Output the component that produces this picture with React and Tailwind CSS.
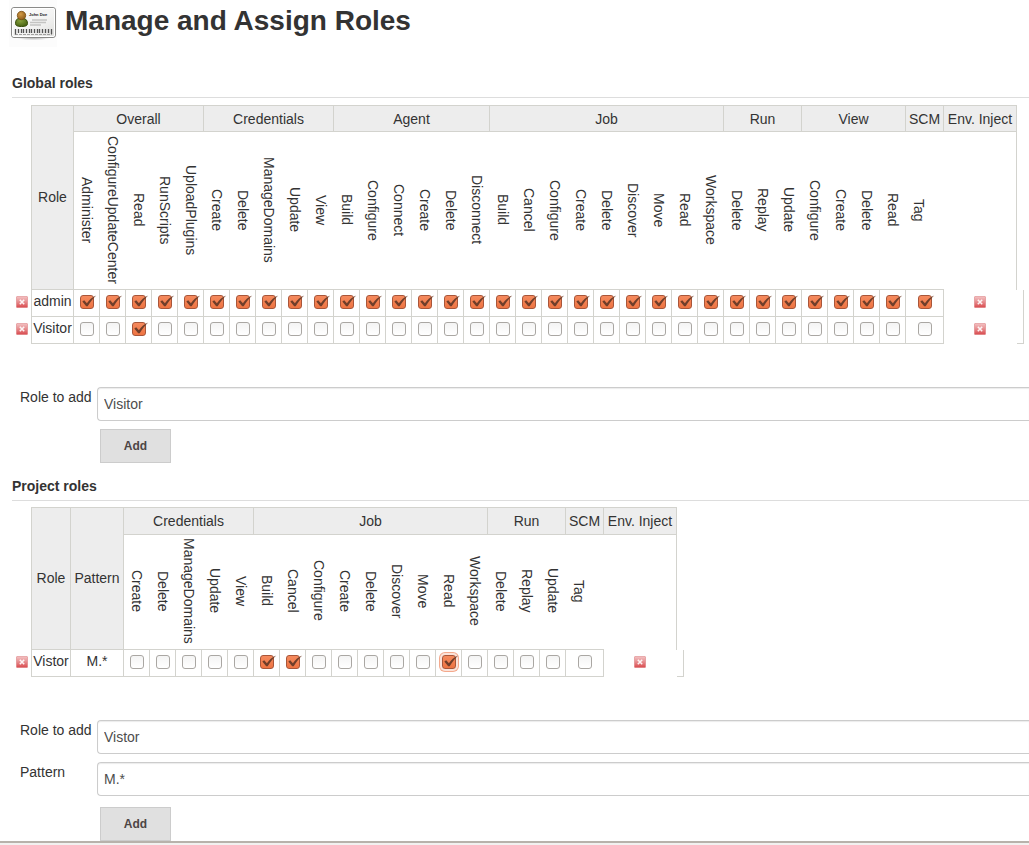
import React from "react";

const CRUD = ["Create", "Delete", "ManageDomains", "Update", "View"];
const JOB = ["Build", "Cancel", "Configure", "Create", "Delete", "Discover", "Move", "Read", "Workspace"];

const GLOBAL_GROUPS = [
  { name: "Overall", items: ["Administer", "ConfigureUpdateCenter", "Read", "RunScripts", "UploadPlugins"] },
  { name: "Credentials", items: CRUD },
  { name: "Agent", items: ["Build", "Configure", "Connect", "Create", "Delete", "Disconnect"] },
  { name: "Job", items: JOB },
  { name: "Run", items: ["Delete", "Replay", "Update"] },
  { name: "View", items: ["Configure", "Create", "Delete", "Read"] },
  { name: "SCM", items: ["Tag"] },
];

const PROJECT_GROUPS = [
  { name: "Credentials", items: CRUD },
  { name: "Job", items: JOB },
  { name: "Run", items: ["Delete", "Replay", "Update"] },
  { name: "SCM", items: ["Tag"] },
];

const GLOBAL_ROWS = [
  { role: "admin", isChecked: () => true },
  { role: "Visitor", isChecked: (key) => key === "Overall/Read" },
];

const PROJECT_ROWS = [
  {
    role: "Vistor",
    pattern: "M.*",
    isChecked: (key) => ["Job/Build", "Job/Cancel", "Job/Read"].includes(key),
    highlighted: "Job/Read",
  },
];

function Badge() {
  return (
    <svg viewBox="0 0 48 47" className="h-[47px] w-12 shrink-0" aria-hidden="true">
      <defs>
        <linearGradient id="card" x1="0" y1="0" x2="1" y2="1">
          <stop offset="0" stopColor="#ffffff" />
          <stop offset="0.6" stopColor="#f2f2f1" />
          <stop offset="1" stopColor="#dededc" />
        </linearGradient>
        <radialGradient id="face" cx="0.4" cy="0.35" r="0.7">
          <stop offset="0" stopColor="#d39a45" />
          <stop offset="1" stopColor="#8b5a17" />
        </radialGradient>
        <radialGradient id="body" cx="0.4" cy="0.3" r="0.8">
          <stop offset="0" stopColor="#86a03c" />
          <stop offset="1" stopColor="#3f5a0c" />
        </radialGradient>
        <radialGradient id="shade">
          <stop offset="0" stopColor="#999" stopOpacity="0.8" />
          <stop offset="1" stopColor="#999" stopOpacity="0" />
        </radialGradient>
      </defs>
      <rect width="48" height="47" fill="#fcfcfc" />
      <ellipse cx="24.500" cy="37.500" rx="17" ry="3" fill="url(#shade)" />
      <rect x="2.500" y="7.500" width="44" height="30" rx="2.500" fill="url(#card)" stroke="#8a8a88" />
      <rect x="3.500" y="8.500" width="42" height="28" rx="1.500" fill="none" stroke="#fff" />
      <path d="M6.500 23.500c0-3.500 1.500-5 3.500-5h4c2.500 0 4.500 1.500 4.500 5 0 2-1.500 3-6 3s-6-1-6-3z" fill="url(#body)" stroke="#364c0b" />
      <circle cx="12.500" cy="15.500" r="4.200" fill="url(#face)" stroke="#7a4d10" strokeWidth="0.800" />
      <text x="20" y="16" fontSize="4" fontWeight="700" fill="#222" fontFamily="Liberation Sans, sans-serif">John Doe</text>
      <path d="M23 20h15M21 22.500h16M21 25h11" stroke="#c4c4c2" strokeWidth="1.300" />
      <path
        d="M6.500 29v6M9.500 29v4M12.500 29v4M14.500 29v4M17.500 29v4M20.500 29v4M22.500 29v4M25.500 29v4M28.500 29v4M30.500 29v4M33.500 29v4M36.500 29v4M39.500 29v4M42.500 29v5"
        stroke="#555"
        strokeWidth="1.300"
      />
      <path d="M6 34.500h37" stroke="#8d8d8b" strokeWidth="0.800" strokeDasharray="3 1" />
    </svg>
  );
}

function RemoveButton({ label }) {
  return (
    <button type="button" aria-label={label} className="block size-3">
      <svg viewBox="0 0 12 12" className="block size-3" aria-hidden="true">
        <defs>
          <linearGradient id="remove" x1="0" y1="0" x2="0" y2="1">
            <stop offset="0" stopColor="#f3c2c3" />
            <stop offset="0.500" stopColor="#e68b8d" />
            <stop offset="1" stopColor="#d9494d" />
          </linearGradient>
        </defs>
        <rect x="0.500" y="0.500" width="11" height="11" rx="0.500" fill="url(#remove)" stroke="#d25d60" strokeOpacity="0.400" />
        <path d="M3.800 3.800l4.400 4.400M8.200 3.800l-4.400 4.400" stroke="#fff" strokeOpacity="0.900" strokeWidth="1.600" />
      </svg>
    </button>
  );
}

function Tick({ label, checked, highlighted }) {
  return (
    <span className="relative mx-auto block size-[14px]">
      <input
        type="checkbox"
        aria-label={label}
        defaultChecked={checked}
        className={
          "peer block size-[14px] appearance-none rounded-[3px] border border-[#aaa7a3] bg-linear-to-b from-[#f4f4f4] to-white checked:border-[#a8563a] checked:from-[#f58a5e] checked:to-[#ee7442]" +
          (highlighted ? " shadow-[0_0_0_2px_#fbe3da,0_0_0_3px_#f4a98c]" : "")
        }
      />
      <svg
        viewBox="0 0 17 14"
        className="pointer-events-none absolute top-0 left-0 hidden h-[14px] w-[17px] peer-checked:block"
        aria-hidden="true"
      >
        <path d="M2.300 6.600L4.200 5.200L6.900 8.200C9 5.200 12 2.400 16.200 0.600C12.700 4 9.900 7.500 7.700 11.300L6.200 11.300Z" fill="#703e2a" />
      </svg>
    </span>
  );
}

const HEAD = "border-r border-b border-[#d3d3ce] bg-[#ededed] p-0 text-center align-middle font-normal";
const TOP = HEAD + " border-t";
const CELL = "h-[27px] border-r border-b border-[#d3d3ce] p-0 text-center align-middle";

function RoleTable({ groups, rows, withPattern }) {
  const columns = groups.flatMap((g) => g.items.map((item) => ({ group: g.name, item, key: g.name + "/" + item })));
  const groupHead = TOP + (withPattern ? " h-7" : " h-[27px]");
  return (
    <table className="border-separate border-spacing-0 leading-5 whitespace-nowrap">
      <colgroup>
        <col className="w-[19px]" />
        <col className={withPattern ? "w-[40px]" : "w-[43px]"} />
        {withPattern && <col className="w-[53px]" />}
        {columns.map((c) => (
          <col key={c.key} className={c.group === "SCM" ? "w-[38px]" : "w-[26px]"} />
        ))}
        <col className="w-[73px]" />
        <col className="w-[7px]" />
      </colgroup>
      <thead>
        <tr>
          <td rowSpan={2} className="p-0" />
          <th rowSpan={2} scope="col" className={TOP + " border-l"}>Role</th>
          {withPattern && <th rowSpan={2} scope="col" className={TOP}>Pattern</th>}
          {groups.map((g) => (
            <th key={g.name} colSpan={g.items.length} scope="colgroup" className={groupHead}>{g.name}</th>
          ))}
          <th scope="col" className={groupHead}>Env. Inject</th>
          <td rowSpan={2} className="p-0" />
        </tr>
        <tr>
          {columns.map((c) => (
            <th
              key={c.key}
              scope="col"
              className={
                "border-b border-[#d3d3ce] pr-px pl-[3px] align-middle font-normal " +
                (withPattern ? "pt-[3px] pb-[5px]" : "pt-1 pb-[5px]")
              }
            >
              <span className="block w-5 leading-5 text-[#333] [writing-mode:vertical-rl]">{c.item}</span>
            </th>
          ))}
          <td className="border-r border-[#d3d3ce] p-0" />
        </tr>
      </thead>
      <tbody>
        {rows.map((row, i) => (
          <tr key={row.role}>
            <td className="p-0 pb-0.5 pl-1"><RemoveButton label={"Remove " + row.role} /></td>
            <th scope="row" className={CELL + " border-l pb-1 font-normal"}>{row.role}</th>
            {withPattern && <td className={CELL + " pb-1"}>{row.pattern}</td>}
            {columns.map((c) => (
              <td key={c.key} className={CELL + " pb-0.5"}>
                <Tick
                  label={row.role + ": " + c.group + " " + c.item}
                  checked={row.isChecked(c.key)}
                  highlighted={row.highlighted === c.key}
                />
              </td>
            ))}
            <td className="p-0 pr-px pb-0.5">
              <div className="flex justify-center"><RemoveButton label={"Remove role " + row.role} /></div>
            </td>
            <td className={"border-r border-[#d3d3ce] p-0" + (i === rows.length - 1 ? " border-b" : "")} />
          </tr>
        ))}
      </tbody>
    </table>
  );
}

function Field({ id, label, value }) {
  return (
    <div className="flex items-start">
      <label htmlFor={id} className="w-[77px] shrink-0 leading-5 whitespace-nowrap">{label}</label>
      <input
        id={id}
        type="text"
        defaultValue={value}
        className="h-[34px] min-w-0 flex-1 rounded-l border border-r-0 border-[#ccc] bg-white px-[6px] text-[#4d4d4d] shadow-[inset_0_1px_1px_rgba(0,0,0,0.08)] outline-none"
      />
    </div>
  );
}

function AddButton() {
  return (
    <button type="button" className="ml-20 block h-[34px] w-[71px] border border-[#ccc] bg-[#e0e0e0] text-xs font-bold text-[#4d4545]">
      Add
    </button>
  );
}

function SectionTitle({ children }) {
  return <h2 className="border-b border-[#ddd] pb-1 leading-5 font-bold">{children}</h2>;
}

export default function App() {
  return (
    <div className="min-h-screen overflow-hidden bg-white font-['Liberation_Sans',Arial,sans-serif] text-sm text-[#333]">
      <header className="flex items-start gap-2 pl-[9px]">
        <Badge />
        <h1 className="pt-[3px] text-[28px] leading-9 font-bold">Manage and Assign Roles</h1>
      </header>
      <main className="pl-3">
        <section className="pt-[26px]">
          <SectionTitle>Global roles</SectionTitle>
          <div className="pt-[7px]">
            <RoleTable groups={GLOBAL_GROUPS} rows={GLOBAL_ROWS} />
          </div>
          <form className="flex flex-col gap-2 pt-[43px] pl-2" onSubmit={(e) => e.preventDefault()}>
            <Field id="global-role" label="Role to add" value="Visitor" />
            <AddButton />
          </form>
        </section>
        <section className="pt-[13px]">
          <SectionTitle>Project roles</SectionTitle>
          <div className="pt-[6px]">
            <RoleTable groups={PROJECT_GROUPS} rows={PROJECT_ROWS} withPattern />
          </div>
          <form className="flex flex-col gap-2 pt-[43px] pl-2" onSubmit={(e) => e.preventDefault()}>
            <Field id="project-role" label="Role to add" value="Vistor" />
            <Field id="project-pattern" label="Pattern" value="M.*" />
            <div className="pt-[3px]"><AddButton /></div>
          </form>
        </section>
      </main>
      <footer className="h-1 border-t-2 border-[#b8b2ab] bg-[#f2f1f0]" />
    </div>
  );
}
